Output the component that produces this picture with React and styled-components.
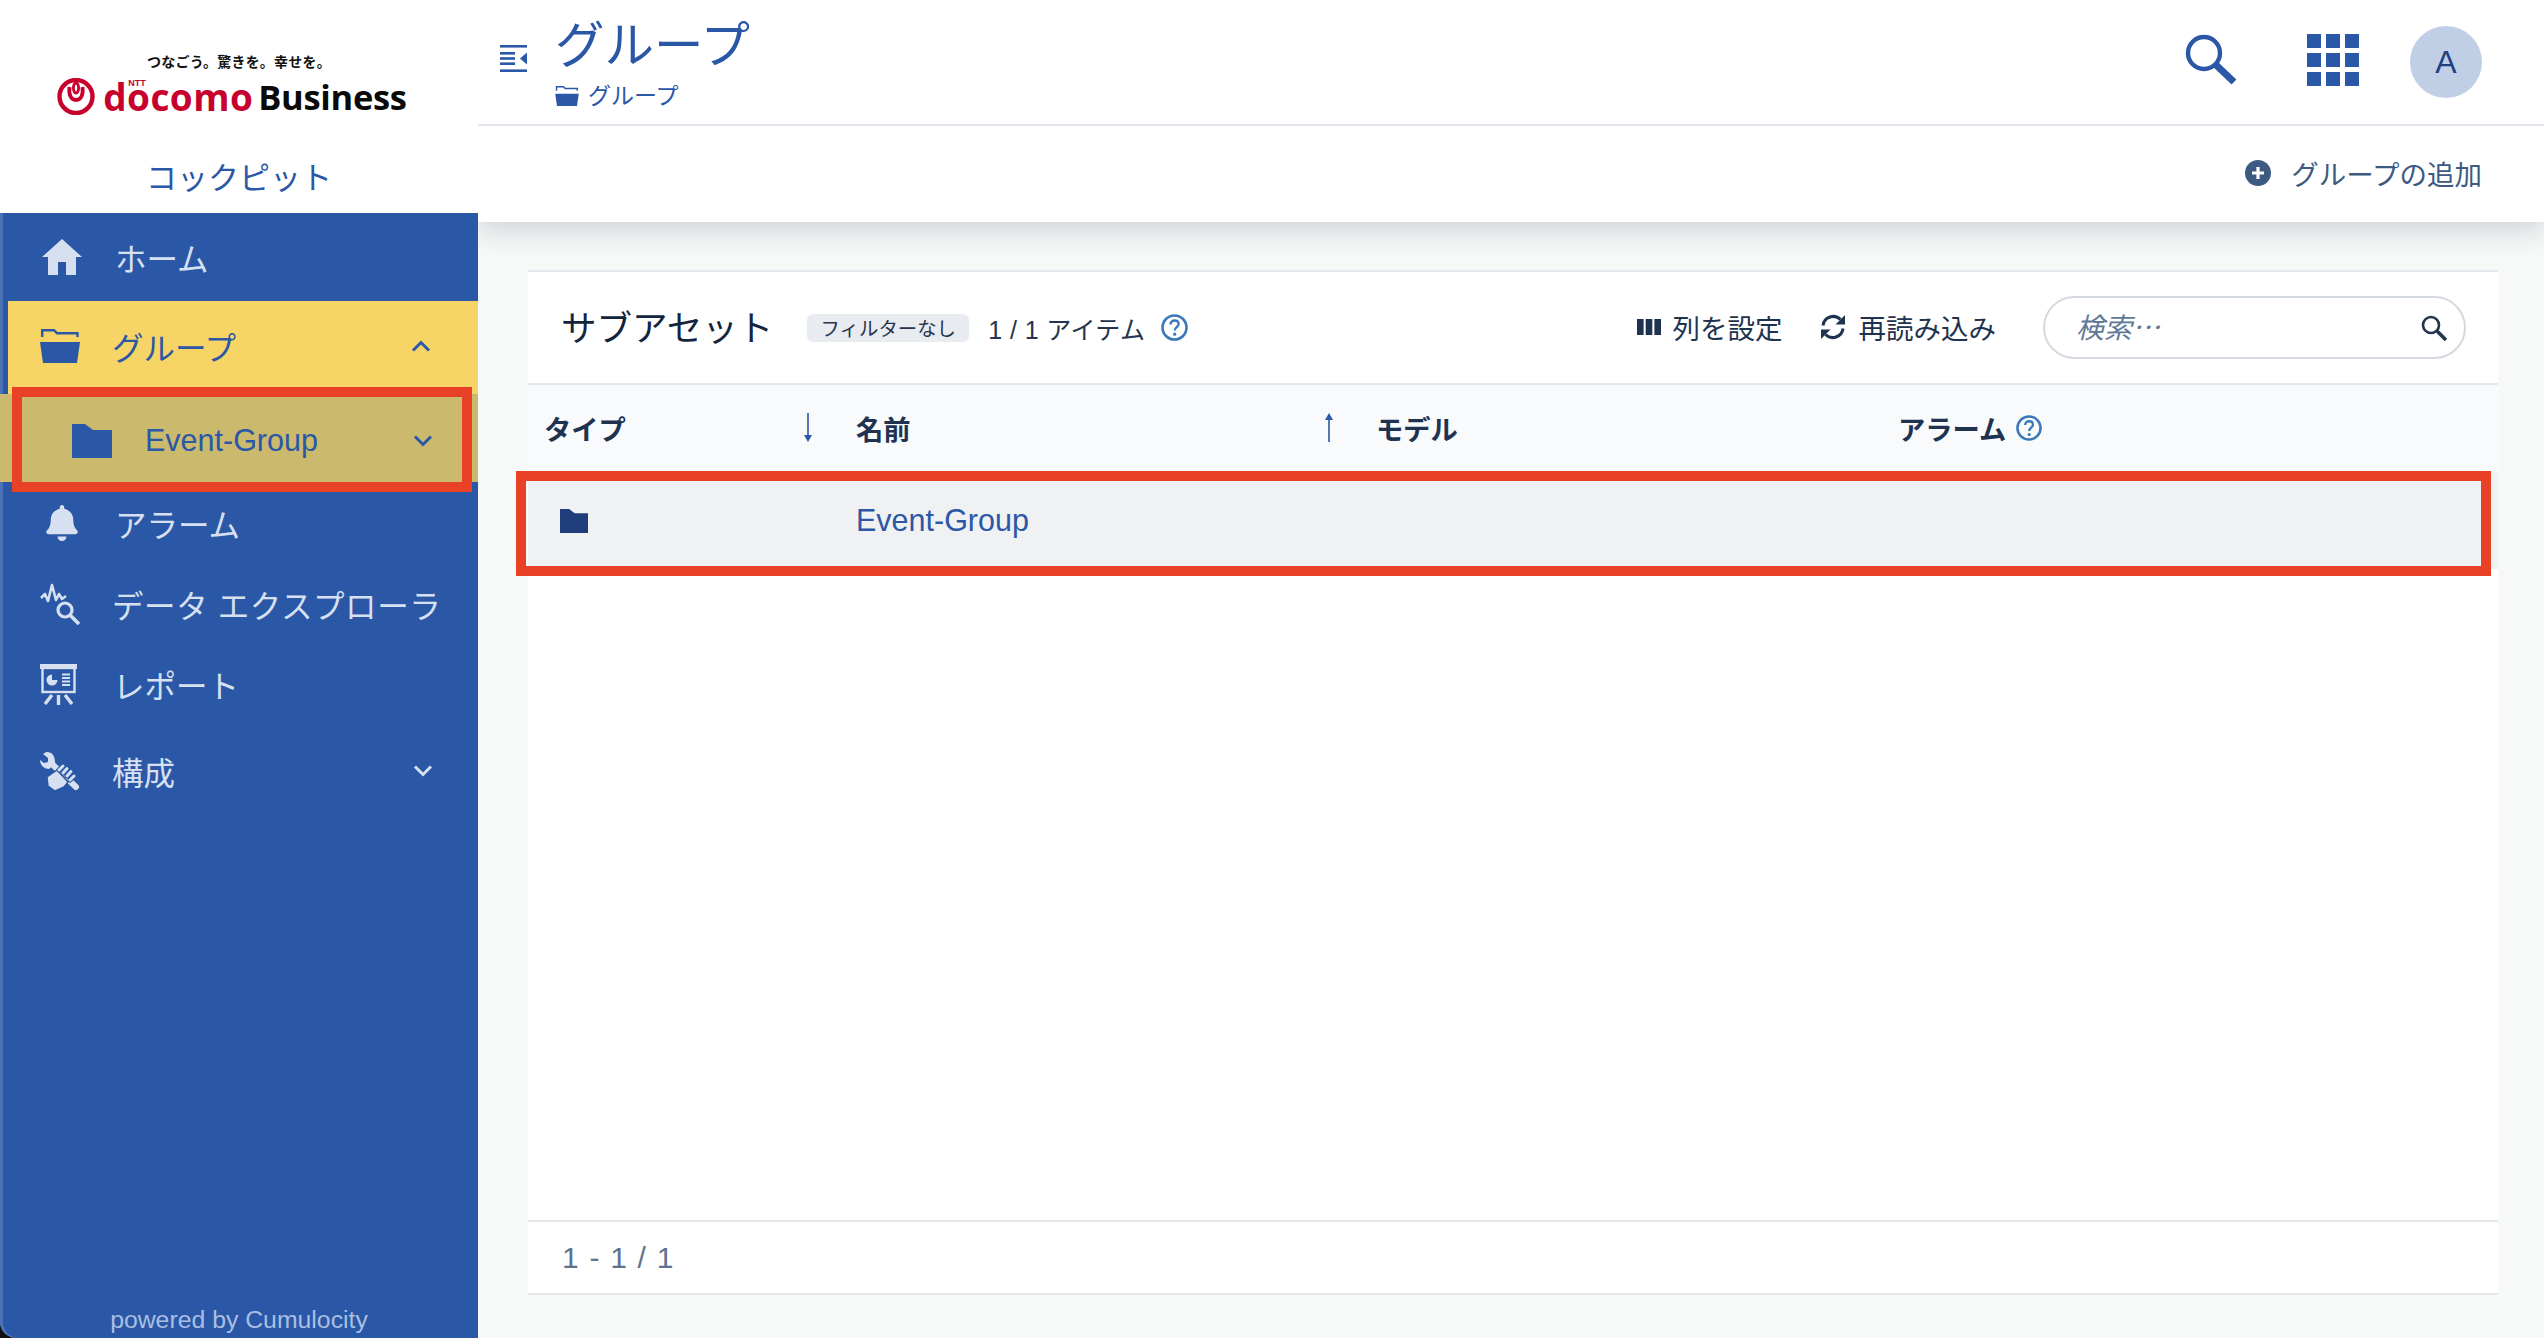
import React from 'react';
import styled, { createGlobalStyle } from 'styled-components';
import { FaBell } from 'react-icons/fa';

const BLUE = '#2a57a6';
const LIGHT = '#d6e0f1';
const FONT = '"Liberation Sans", "Noto Sans CJK JP", sans-serif';

const Global = createGlobalStyle`
  html, body { margin: 0; padding: 0; height: 100%; background: #111; overflow: hidden; }
  #root { height: 100%; }
  * { box-sizing: border-box; }
  body { font-family: ${FONT}; }
`;

const Shell = styled.div`
  display: flex;
  height: 1338px;
  width: 2544px;
`;

const Sidebar = styled.aside`
  width: 478px;
  flex: none;
  display: flex;
  flex-direction: column;
  background: ${BLUE};
  border-bottom-left-radius: 16px;
  box-shadow: inset 3px 0 0 #4a72b6;
  overflow: hidden;
`;

const Brand = styled.div`
  height: 213px;
  background: #fff;
  display: flex;
  flex-direction: column;
  align-items: center;
  padding-top: 51px;
`;

const Tagline = styled.div`
  font: 700 14px "Noto Sans CJK JP", sans-serif;
  letter-spacing: 0.2px;
  line-height: 20px;
  color: #111;
`;

const LogoRow = styled.div`
  display: flex;
  align-items: center;
  height: 42px;
  margin-top: 4px;
  margin-left: -14px;
`;

const Docomo = styled.span`
  position: relative;
  font: 700 37px "Open Sans", sans-serif;
  letter-spacing: 0.4px;
  color: #c8002d;
  margin-left: 8px;
`;

const Ntt = styled.span`
  position: absolute;
  left: 25px;
  top: 7px;
  font: 700 9px "Liberation Sans", sans-serif;
  letter-spacing: 0;
  color: #c8002d;
`;

const Business = styled.span`
  font: 700 34.5px "Open Sans", sans-serif;
  letter-spacing: -0.3px;
  color: #0a0a0a;
  margin-left: 5px;
`;

const AppName = styled.div`
  margin-top: 40px;
  font-size: 31px;
  line-height: 44px;
  color: ${BLUE};
`;

const Nav = styled.nav`
  display: flex;
  flex-direction: column;
`;

const NavItem = styled.div`
  position: relative;
  display: flex;
  align-items: center;
  height: ${p => p.$h}px;
  margin-left: ${p => (p.$active ? 8 : 0)}px;
  padding: ${p => p.$pt || 0}px ${p => p.$pr || 47}px ${p => p.$pb || 0}px ${p => (p.$active ? 32 : p.$sub ? 72 : 40)}px;
  background: ${p => (p.$active ? '#f6d465' : p.$sub ? '#cbb96e' : 'transparent')};
  color: ${p => (p.$active || p.$sub ? BLUE : LIGHT)};
  font-size: ${p => (p.$sub ? 30.5 : 31.5)}px;
  letter-spacing: ${p => p.$ls || 0}px;
  white-space: nowrap;
`;

const IconSlot = styled.span`
  width: ${p => p.$w || 72}px;
  padding-left: ${p => p.$il || 0}px;
  flex: none;
  display: flex;
  align-items: center;
`;

const Chevron = styled.svg`
  margin-left: auto;
  flex: none;
`;

const Powered = styled.div`
  margin-top: auto;
  height: 33px;
  text-align: center;
  font-size: 24.8px;
  line-height: 30px;
  color: #a9bfe3;
`;

const Highlight = styled.div`
  position: absolute;
  border: 10px solid #e94125;
  pointer-events: none;
  z-index: 2;
  top: ${p => p.$t}px;
  bottom: ${p => p.$b}px;
  left: ${p => p.$l}px;
  right: ${p => p.$r}px;
`;

const Main = styled.main`
  flex: 1;
  min-width: 0;
  display: flex;
  flex-direction: column;
  background: #f7f8f8;
`;

const TopBar = styled.header`
  height: 126px;
  flex: none;
  background: #fff;
  border-bottom: 2px solid #e1e4ea;
  display: flex;
  align-items: flex-start;
  padding-left: 22px;
`;

const TitleBlock = styled.div`
  margin-left: 28px;
  display: flex;
  flex-direction: column;
`;

const PageTitle = styled.h1`
  margin: 15px 0 0;
  font-size: 49.5px;
  font-weight: 400;
  line-height: 62px;
  color: ${BLUE};
`;

const Crumb = styled.div`
  display: flex;
  align-items: center;
  gap: 9px;
  margin-top: 4px;
  font-size: 23px;
  line-height: 30px;
  color: ${BLUE};
`;

const TopIcons = styled.div`
  margin-left: auto;
  padding-right: 62px;
  padding-top: 26px;
  display: flex;
  align-items: flex-start;
`;

const Avatar = styled.div`
  width: 72px;
  height: 72px;
  border-radius: 50%;
  background: #c0cfe6;
  color: #1f4180;
  font-size: 32px;
  display: flex;
  align-items: center;
  justify-content: center;
  margin-left: 51px;
`;

const ActionBar = styled.div`
  height: 96px;
  flex: none;
  background: #fff;
  box-shadow: 0 6px 28px rgba(40, 50, 70, 0.22);
  clip-path: inset(0 0 -50px 0);
  display: flex;
  align-items: center;
  justify-content: flex-end;
  padding: 0 62px 2px 0;
  gap: 20px;
  font-size: 27.5px;
  color: #3d5a80;
  position: relative;
  z-index: 1;
`;

const Content = styled.div`
  flex: 1;
  min-height: 0;
  padding: 48px 46px 43px 50px;
  display: flex;
`;

const Card = styled.section`
  flex: 1;
  display: flex;
  flex-direction: column;
  background: #fff;
  border-top: 2px solid #e4e7ec;
`;

const CardHead = styled.div`
  height: 113px;
  flex: none;
  display: flex;
  align-items: center;
  padding: 0 32px 0 33px;
  border-bottom: 2px solid #e4e7ec;
`;

const CardTitle = styled.h2`
  margin: 0 0 5px;
  font-size: 35.5px;
  font-weight: 400;
  color: #14243c;
`;

const Badge = styled.span`
  margin-left: 34px;
  height: 28px;
  width: 162px;
  border-radius: 6px;
  background: #e8ecf0;
  color: #26354d;
  font-size: 19.4px;
  display: flex;
  align-items: center;
  justify-content: center;
`;

const Count = styled.span`
  margin-left: 19px;
  font-size: 25px;
  color: #26354d;
  letter-spacing: 0.4px;
`;

const HelpMark = styled.span`
  margin-left: 16px;
  display: flex;
`;

const HeadAction = styled.span`
  display: flex;
  align-items: center;
  gap: ${p => p.$gap}px;
  margin-left: ${p => p.$ml};
  padding-bottom: 2px;
  font-size: 27.5px;
  color: #1f3350;
`;

const SearchBox = styled.div`
  margin-left: 47px;
  width: 423px;
  height: 63px;
  border: 2px solid #d5dae0;
  border-radius: 32px;
  display: flex;
  align-items: center;
  justify-content: space-between;
  padding: 0 17px 0 31px;
  font-family: "Noto Sans CJK JP", sans-serif;
  font-size: 28px;
  font-style: italic;
  color: #5f7896;
`;

const Placeholder = styled.span`
  padding-bottom: 3px;
`;

const TableGrid = styled.div`
  display: grid;
  grid-template-columns: 312px 520px 522px 1fr;
  flex: none;
  height: ${p => p.$h}px;
  background: ${p => p.$bg};
  position: relative;
`;

const HeadCell = styled.div`
  display: flex;
  align-items: center;
  justify-content: space-between;
  padding: 0 ${p => p.$pr || 0}px 2px 16px;
  font-size: 27.3px;
  font-weight: 700;
  color: #1f3350;
`;

const HeadLabel = styled.span`
  display: flex;
  align-items: center;
  gap: 10px;
`;

const BodyCell = styled.div`
  display: flex;
  align-items: center;
  padding-left: ${p => p.$pl}px;
  font-size: 30.5px;
  color: ${BLUE};
`;

const TableBody = styled.div`
  flex: 1;
`;

const CardFoot = styled.div`
  height: 75px;
  flex: none;
  border-top: 2px solid #e4e7ec;
  border-bottom: 2px solid #e4e7ec;
  display: flex;
  align-items: center;
  padding-left: 34px;
  font-size: 30px;
  letter-spacing: 1.2px;
  color: #5f7390;
`;

const Question = ({ size = 27 }) => (
  <svg width={size} height={size} viewBox="0 0 27 27" fill="none">
    <circle cx="13.5" cy="13.5" r="12" stroke="#3a78b8" strokeWidth="2.6" />
    <path d="M9.5 10.5c0-2.6 1.8-4 4.1-4 2.3 0 4 1.4 4 3.5 0 3-3.9 3.2-3.9 6.5" stroke="#3a78b8" strokeWidth="2.4" />
    <circle cx="13.7" cy="20.2" r="1.6" fill="#3a78b8" />
  </svg>
);

const ChevronIcon = ({ up, color }) => (
  <Chevron width="20" height="12" viewBox="0 0 20 12" fill="none">
    <path d={up ? 'M2 10.5 10 2.5l8 8' : 'M2 1.5l8 8 8-8'} stroke={color} strokeWidth="3" />
  </Chevron>
);

const HomeIcon = () => (
  <svg width="40" height="36" viewBox="0 0 40 36" fill={LIGHT}>
    <path d="M20 0 40 18H34V36H24V23H16V36H6V18H0Z" />
  </svg>
);

const FolderOpen = ({ w = 40, h = 34 }) => (
  <svg width={w} height={h} viewBox="0 0 40 34" fill="none">
    <path d="M2.2 8V1.2H14l3 3h20.5V8" stroke={BLUE} strokeWidth="2.4" />
    <path d="M0 13H40L37 34H3Z" fill={BLUE} />
  </svg>
);

const FolderClosed = ({ w = 40, h = 34, color = BLUE }) => (
  <svg width={w} height={h} viewBox="0 0 40 34" fill={color}>
    <path d="M0 0H13L21 6H40V34H0Z" />
  </svg>
);

const DataIcon = () => (
  <svg width="42" height="42" viewBox="0 0 42 42" fill="none" stroke={LIGHT}>
    <path d="M1 15 5 11l3 7 4-16 4 15 3-6 3 5 4-3" strokeWidth="2.6" strokeLinejoin="round" />
    <circle cx="25" cy="27" r="7" strokeWidth="3.2" />
    <path d="M30 32l9 9" strokeWidth="3.6" />
  </svg>
);

const ReportIcon = () => (
  <svg width="37" height="41" viewBox="0 0 37 41" fill="none">
    <rect x="0" y="0" width="37" height="5" fill={LIGHT} />
    <rect x="2.5" y="4" width="32" height="24" stroke={LIGHT} strokeWidth="2.4" />
    <circle cx="12" cy="16" r="5.5" fill={LIGHT} />
    <path d="M12 16V9.5h7V16Z" fill={BLUE} />
    <path d="M22 10.5h8M22 14h8M22 17.5h8M22 21h8" stroke={LIGHT} strokeWidth="2" />
    <path d="M18.5 31v10" stroke={LIGHT} strokeWidth="3.4" />
    <path d="M12 31 5 40M25 31l7 9" stroke={LIGHT} strokeWidth="3.4" />
  </svg>
);

const ToolsIcon = () => (
  <svg width="40" height="40" viewBox="0 0 40 40" fill="none">
    <path d="M7 1c5 0 8 4 8 10 0 1 0 2-1 3l-5 4c-5 0-9-4-9-9l4 3 4-1 0-4-5-4c2-1 2-2 4-2Z" fill={LIGHT} />
    <path d="M11 12 36 36" stroke={LIGHT} strokeWidth="6" strokeLinecap="round" />
    <path d="M7 26 17 19 28 31 24 36 15 40 8 35Z" fill={LIGHT} stroke={BLUE} strokeWidth="1.4" />
    <path d="M19 19l4-4M23 22l4-4.5M27 25l4-4.5M30 29l4-4" stroke={BLUE} strokeWidth="5.2" strokeLinecap="round" />
    <path d="M19 19l4-4M23 22l4-4.5M27 25l4-4.5M30 29l4-4" stroke={LIGHT} strokeWidth="3" strokeLinecap="round" />
  </svg>
);

const ToggleIcon = () => (
  <svg width="27" height="27" viewBox="0 0 27 27" fill={BLUE} style={{ marginTop: 45 }}>
    <rect x="0" y="0" width="27" height="2.6" />
    <rect x="0" y="7" width="15" height="2.6" />
    <rect x="0" y="12.2" width="15" height="2.6" />
    <rect x="0" y="17.4" width="15" height="2.6" />
    <rect x="0" y="24.4" width="27" height="2.6" />
    <path d="M27 7.4V19.6L20 13.5Z" />
  </svg>
);

const BigSearch = () => (
  <svg width="52" height="52" viewBox="0 0 52 52" fill="none" stroke={BLUE} style={{ marginTop: 8 }}>
    <circle cx="19" cy="19" r="16" strokeWidth="4.4" />
    <path d="M30 30 49 48" strokeWidth="7" />
  </svg>
);

const GridIcon = () => (
  <svg width="52" height="52" viewBox="0 0 52 52" fill={BLUE} style={{ marginTop: 8, marginLeft: 70 }}>
    {[0, 19, 38].flatMap(y => [0, 19, 38].map(x => <rect key={`${x}-${y}`} x={x} y={y} width="14" height="14" />))}
  </svg>
);

const PlusCircle = () => (
  <svg width="26" height="26" viewBox="0 0 26 26">
    <circle cx="13" cy="13" r="13" fill="#3d5a80" />
    <path d="M13 7v12M7 13h12" stroke="#fff" strokeWidth="3.2" />
  </svg>
);

const ColumnsIcon = () => (
  <svg width="24" height="16" viewBox="0 0 24 16" fill="#1f3350">
    <rect x="0" y="0" width="6.6" height="16" />
    <rect x="8.7" y="0" width="6.6" height="16" />
    <rect x="17.4" y="0" width="6.6" height="16" />
  </svg>
);

const RefreshIcon = () => (
  <svg width="28" height="28" viewBox="0 0 28 28" fill="none">
    <path d="M4 12.5A10.3 10.3 0 0 1 21.5 6.5" stroke="#1f3350" strokeWidth="3" />
    <path d="M24 15.5A10.3 10.3 0 0 1 6.5 21.5" stroke="#1f3350" strokeWidth="3" />
    <path d="M26 2v9.5h-9.5Z" fill="#1f3350" />
    <path d="M2 26v-9.5h9.5Z" fill="#1f3350" />
  </svg>
);

const SmallSearch = () => (
  <svg width="26" height="26" viewBox="0 0 26 26" fill="none" stroke="#26354d">
    <circle cx="10" cy="10" r="8" strokeWidth="2.6" />
    <path d="M15.5 15.5 25 25" strokeWidth="3.6" />
  </svg>
);

const Arrow = ({ up }) => (
  <svg width="12" height="29" viewBox="0 0 12 29" fill={BLUE}>
    {up ? <path d="M5.2 29V7H2L6 0l4 7H6.8V29Z" /> : <path d="M5.2 0V22H2L6 29l4-7H6.8V0Z" />}
  </svg>
);

export default function App() {
  return (
    <>
      <Global />
      <Shell>
        <Sidebar>
          <Brand>
            <Tagline>つなごう。驚きを。幸せを。</Tagline>
            <LogoRow>
              <svg width="38" height="37" viewBox="0 0 38 37" fill="none" stroke="#c8002d">
                <circle cx="19" cy="18.5" r="16.5" strokeWidth="4.4" />
                <path d="M12.5 9c-1 8 1.5 13 6.5 13s7.5-5 6.5-13" strokeWidth="3.8" />
                <ellipse cx="19" cy="10" rx="2.6" ry="5" strokeWidth="2.8" />
              </svg>
              <Docomo>docomo<Ntt>NTT</Ntt></Docomo>
              <Business>Business</Business>
            </LogoRow>
            <AppName>コックピット</AppName>
          </Brand>
          <Nav>
            <NavItem $h={88}><IconSlot $w={75} $il={2}><HomeIcon /></IconSlot>ホーム</NavItem>
            <NavItem $h={93} $active $pb={4}>
              <IconSlot $w={72}><FolderOpen /></IconSlot>グループ
              <ChevronIcon up color={BLUE} />
            </NavItem>
            <NavItem $h={88} $sub $pt={5} $pr={45}>
              <IconSlot $w={73}><FolderClosed /></IconSlot>Event-Group
              <ChevronIcon color={BLUE} />
              <Highlight $t={-7} $b={-10} $l={12} $r={6} />
            </NavItem>
            <NavItem $h={83} $pb={2}>
              <IconSlot $w={75}><FaBell size={36} color={LIGHT} style={{ marginLeft: 4 }} /></IconSlot>アラーム
            </NavItem>
            <NavItem $h={80} $pb={2} $ls={0.6}><IconSlot><DataIcon /></IconSlot>データ エクスプローラ</NavItem>
            <NavItem $h={80} $pb={2}><IconSlot $w={73}><ReportIcon /></IconSlot>レポート</NavItem>
            <NavItem $h={95} $pb={4} $pr={45}>
              <IconSlot><ToolsIcon /></IconSlot>構成
              <ChevronIcon color={LIGHT} />
            </NavItem>
          </Nav>
          <Powered>powered by Cumulocity</Powered>
        </Sidebar>
        <Main>
          <TopBar>
            <ToggleIcon />
            <TitleBlock>
              <PageTitle>グループ</PageTitle>
              <Crumb><FolderOpen w={24} h={20} />グループ</Crumb>
            </TitleBlock>
            <TopIcons>
              <BigSearch />
              <GridIcon />
              <Avatar>A</Avatar>
            </TopIcons>
          </TopBar>
          <ActionBar><PlusCircle />グループの追加</ActionBar>
          <Content>
            <Card>
              <CardHead>
                <CardTitle>サブアセット</CardTitle>
                <Badge>フィルターなし</Badge>
                <Count>1 / 1 アイテム</Count>
                <HelpMark><Question /></HelpMark>
                <HeadAction $gap={12} $ml="auto"><ColumnsIcon />列を設定</HeadAction>
                <HeadAction $gap={12} $ml="36px"><RefreshIcon />再読み込み</HeadAction>
                <SearchBox><Placeholder>検索…</Placeholder><SmallSearch /></SearchBox>
              </CardHead>
              <TableGrid $h={87} $bg="#f8fafc">
                <HeadCell $pr={26}>タイプ<Arrow /></HeadCell>
                <HeadCell $pr={25}>名前<Arrow up /></HeadCell>
                <HeadCell>モデル</HeadCell>
                <HeadCell><HeadLabel>アラーム<Question size={26} /></HeadLabel></HeadCell>
              </TableGrid>
              <TableGrid $h={97} $bg="#f0f1f3">
                <BodyCell $pl={32}><FolderClosed w={28} h={24} color="#1f3d7a" /></BodyCell>
                <BodyCell $pl={16}>Event-Group</BodyCell>
                <BodyCell $pl={16} />
                <BodyCell $pl={16} />
                <Highlight $t={-1} $b={-7} $l={-12} $r={7} />
              </TableGrid>
              <TableBody />
              <CardFoot>1 - 1 / 1</CardFoot>
            </Card>
          </Content>
        </Main>
      </Shell>
    </>
  );
}
